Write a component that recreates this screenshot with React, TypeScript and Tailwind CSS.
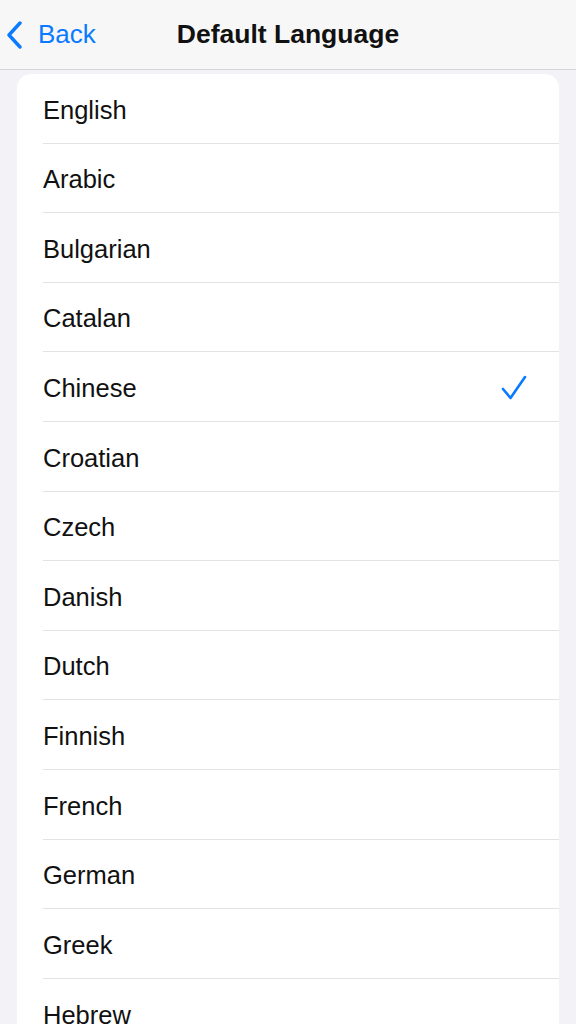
import React from "react";

const languages = [
  "English",
  "Arabic",
  "Bulgarian",
  "Catalan",
  "Chinese",
  "Croatian",
  "Czech",
  "Danish",
  "Dutch",
  "Finnish",
  "French",
  "German",
  "Greek",
  "Hebrew",
];

const selected = "Chinese";

const Row = ({ name, last }: { name: string; last: boolean }) => {
  return (
    <div className="pl-[26px]">
      <div
        className={`h-[69.6px] flex items-center justify-between pr-[32px] ${
          last ? "" : "border-b border-[#e3e3e6]"
        }`}
      >
        <span className="text-[25.5px] text-[#111] pt-[3px]">{name}</span>
        {name === selected && (
          <svg width="26" height="25" viewBox="0 0 26 25" fill="none" className="mt-[2px]">
            <path
              d="M2 14 L9.5 23 L24 2"
              stroke="#0a7aff"
              strokeWidth="2.6"
              strokeLinecap="round"
              strokeLinejoin="round"
            />
          </svg>
        )}
      </div>
    </div>
  );
};

export default function App() {
  return (
    <div
      className="w-[576px] h-[1024px] overflow-hidden bg-[#f2f2f7]"
      style={{ fontFamily: '"Liberation Sans", Arial, sans-serif' }}
    >
      <header className="h-[70px] bg-[#f7f7f8] border-b border-[#d4d4d8] relative flex items-center justify-center">
        <div className="absolute left-[6px] top-0 h-full flex items-center gap-[15px]">
          <svg width="17" height="28" viewBox="0 0 17 28" fill="none">
            <path
              d="M14 2 L3 14 L14 26"
              stroke="#0a7aff"
              strokeWidth="3.4"
              strokeLinecap="round"
              strokeLinejoin="round"
            />
          </svg>
          <span className="text-[26px] text-[#0a7aff]">Back</span>
        </div>
        <h1 className="text-[26.5px] font-bold text-[#111]">Default Language</h1>
      </header>
      <div className="mt-[4px] mx-[17px] bg-white rounded-[14px]">
        {languages.map((l, i) => (
          <Row key={l} name={l} last={i === languages.length - 1} />
        ))}
      </div>
    </div>
  );
}
